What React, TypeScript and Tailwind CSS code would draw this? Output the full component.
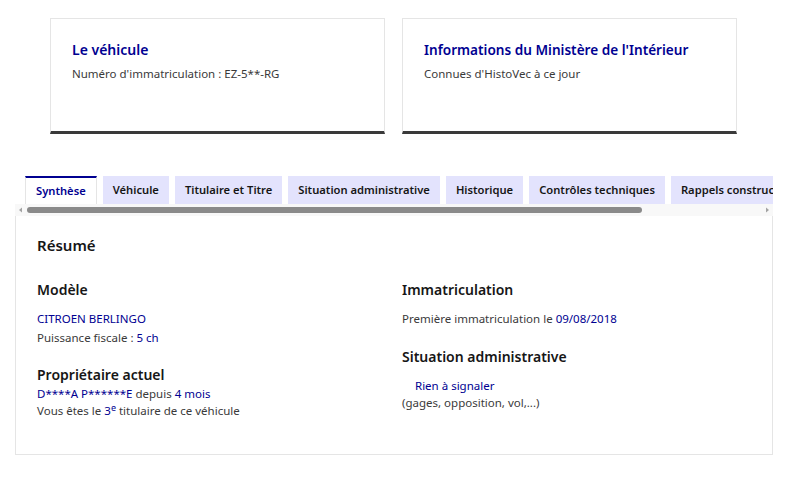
import React from "react";

const tabs = [
  "Synthèse",
  "Véhicule",
  "Titulaire et Titre",
  "Situation administrative",
  "Historique",
  "Contrôles techniques",
  "Rappels constructeur",
];

export default function App() {
  return (
    <div className="w-[800px] h-[480px] bg-white overflow-hidden font-['Noto_Sans',sans-serif] text-[#3a3a3a]">
      <div className="flex gap-[17px] pl-[50px] pt-[18px]">
        <div className="w-[335px] h-[116px] border border-[#e5e5e5] border-b-[3px] border-b-[#3a3a3a] px-[21px] pt-[20px]">
          <div className="text-[14px] font-semibold text-[#000091] leading-[22px]">Le véhicule</div>
          <div className="text-[11.5px] leading-[18px] mt-[4px]">Numéro d'immatriculation : EZ-5**-RG</div>
        </div>
        <div className="w-[335px] h-[116px] border border-[#e5e5e5] border-b-[3px] border-b-[#3a3a3a] px-[21px] pt-[20px]">
          <div className="text-[13.6px] font-semibold text-[#000091] leading-[22px]">Informations du Ministère de l'Intérieur</div>
          <div className="text-[11.5px] leading-[18px] mt-[4px]">Connues d'HistoVec à ce jour</div>
        </div>
      </div>

      <div className="ml-[15px] w-[758px] mt-[42px]">
        <div className="flex gap-[6px] pl-[10px] overflow-hidden">
          {tabs.map((t, i) => (
            <div
              key={t}
              className={
                i === 0
                  ? "shrink-0 h-[28px] px-[10px] flex items-center text-[11.2px] font-semibold text-[#000091] bg-white border-t-2 border-[#000091] border-x border-x-[#e5e5e5] whitespace-nowrap"
                  : "shrink-0 h-[28px] px-[10px] flex items-center text-[11.2px] font-semibold text-[#161616] bg-[#e3e3fd] whitespace-nowrap"
              }
            >
              {t}
            </div>
          ))}
        </div>
        <div className="h-[12px] flex items-center bg-[#f8f8f8]">
          <svg width="12" height="12" viewBox="0 0 12 12" className="shrink-0">
            <path d="M4 6 L7 3.5 L7 8.5 Z" fill="#a3a3a3" />
          </svg>
          <div className="flex-1 h-[12px] flex items-center">
            <div className="w-[615px] h-[6px] rounded-full bg-[#8a8a8a]" />
          </div>
          <svg width="12" height="12" viewBox="0 0 12 12" className="shrink-0">
            <path d="M8 6 L5 3.5 L5 8.5 Z" fill="#a3a3a3" />
          </svg>
        </div>
        <div className="h-[239px] border border-t-0 border-[#e5e5e5] px-[21px] pt-[16px]">
          <div className="text-[15px] font-semibold text-[#161616] leading-[26px]">Résumé</div>
          <div className="grid grid-cols-[365px_1fr] mt-[21px]">
            <div>
              <div className="text-[14px] font-semibold text-[#161616] leading-[22px]">Modèle</div>
              <div className="text-[11.5px] leading-[19px] mt-[8px] text-[#000091]">CITROEN BERLINGO</div>
              <div className="text-[11.5px] leading-[19px]">
                Puissance fiscale : <span className="text-[#000091]">5 ch</span>
              </div>
              <div className="text-[14px] font-semibold text-[#161616] leading-[20px] mt-[18px]">Propriétaire actuel</div>
              <div className="text-[11.5px] leading-[17px]">
                <span className="text-[#000091]">D****A P******E</span> depuis{" "}
                <span className="text-[#000091]">4 mois</span>
              </div>
              <div className="text-[11.5px] leading-[17px]">
                Vous êtes le <span className="text-[#000091]">3<sup className="text-[9px]">e</sup></span> titulaire de ce véhicule
              </div>
            </div>
            <div>
              <div className="text-[14px] font-semibold text-[#161616] leading-[22px]">Immatriculation</div>
              <div className="text-[11.5px] leading-[19px] mt-[8px]">
                Première immatriculation le <span className="text-[#000091]">09/08/2018</span>
              </div>
              <div className="text-[14px] font-semibold text-[#161616] leading-[22px] mt-[18px]">Situation administrative</div>
              <div className="text-[11.5px] leading-[17px] mt-[9px] pl-[13px] text-[#000091]">Rien à signaler</div>
              <div className="text-[11.5px] leading-[17px]">(gages, opposition, vol,...)</div>
            </div>
          </div>
        </div>
      </div>
    </div>
  );
}
